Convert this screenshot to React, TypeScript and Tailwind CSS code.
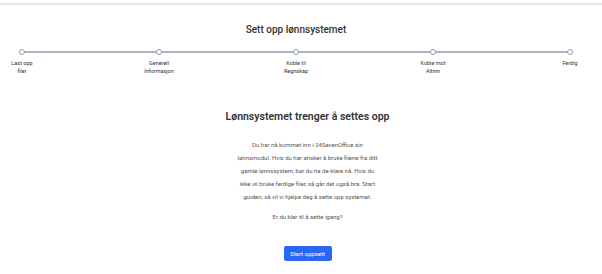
const steps = [
  ["Last opp", "filer"],
  ["Generell", "Informasjon"],
  ["Koble til", "Regnskap"],
  ["Koble mot", "Altinn"],
  ["Ferdig", ""],
];

function Step({ label }: { label: string[] }) {
  return (
    <div className="flex w-[44px] flex-col items-center">
      <div className="h-[6px] w-[6px] rounded-full border-[1.5px] border-[#8f9bab] bg-white" />
      <div className="mt-[4px] text-center text-[5.5px] leading-[8px] text-[#333]">
        <div>{label[0]}</div>
        {label[1] && <div>{label[1]}</div>}
      </div>
    </div>
  );
}

export default function App() {
  return (
    <div
      className="min-h-[274px] w-full bg-white"
      style={{ fontFamily: "Roboto, 'Liberation Sans', sans-serif" }}
    >
      <div className="pt-[3px]">
        <div className="h-[2px] w-full bg-[#e6e6e6]" />
      </div>

      <div className="w-[592px]">
        <h1 className="mt-[18px] text-center text-[10px] font-medium leading-[14px] text-[#333]">
          Sett opp lønnsystemet
        </h1>

        <div className="mt-[12px] flex items-start">
          {steps.map((s, i) => (
            <div key={i} className={i < steps.length - 1 ? "flex flex-1 items-start" : "flex items-start"}>
              <Step label={s} />
              {i < steps.length - 1 && (
                <div className="mx-[-19px] mt-[2px] h-[2px] flex-1 bg-[#aab4c2]" />
              )}
            </div>
          ))}
        </div>
      </div>

      <div className="ml-[13px] flex flex-col items-center">
        <h2 className="mt-[35px] text-[10.5px] font-semibold leading-[14px] text-[#333]">
          Lønnsystemet trenger å settes opp
        </h2>
        <p className="mt-[14px] w-[144px] text-center text-[6px] leading-[13px] text-[#555]">
          Du har nå kommet inn i 24SevenOffice sin lønnsmodul. Hvis du har ønsker å bruke filene fra ditt
          gamle lønnssystem, bør du ha de klare nå. Hvis du ikke vil bruke ferdige filer, så går det også
          bra. Start guiden, så vil vi hjelpe deg å sette opp systemet.
        </p>
        <p className="mt-[7px] text-[6px] leading-[13px] text-[#555]">Er du klar til å sette igang?</p>
        <button className="mt-[23px] h-[15px] w-[48px] rounded-[2px] bg-[#2b67f6] text-[6px] text-white">
          Start oppsett
        </button>
      </div>
    </div>
  );
}
